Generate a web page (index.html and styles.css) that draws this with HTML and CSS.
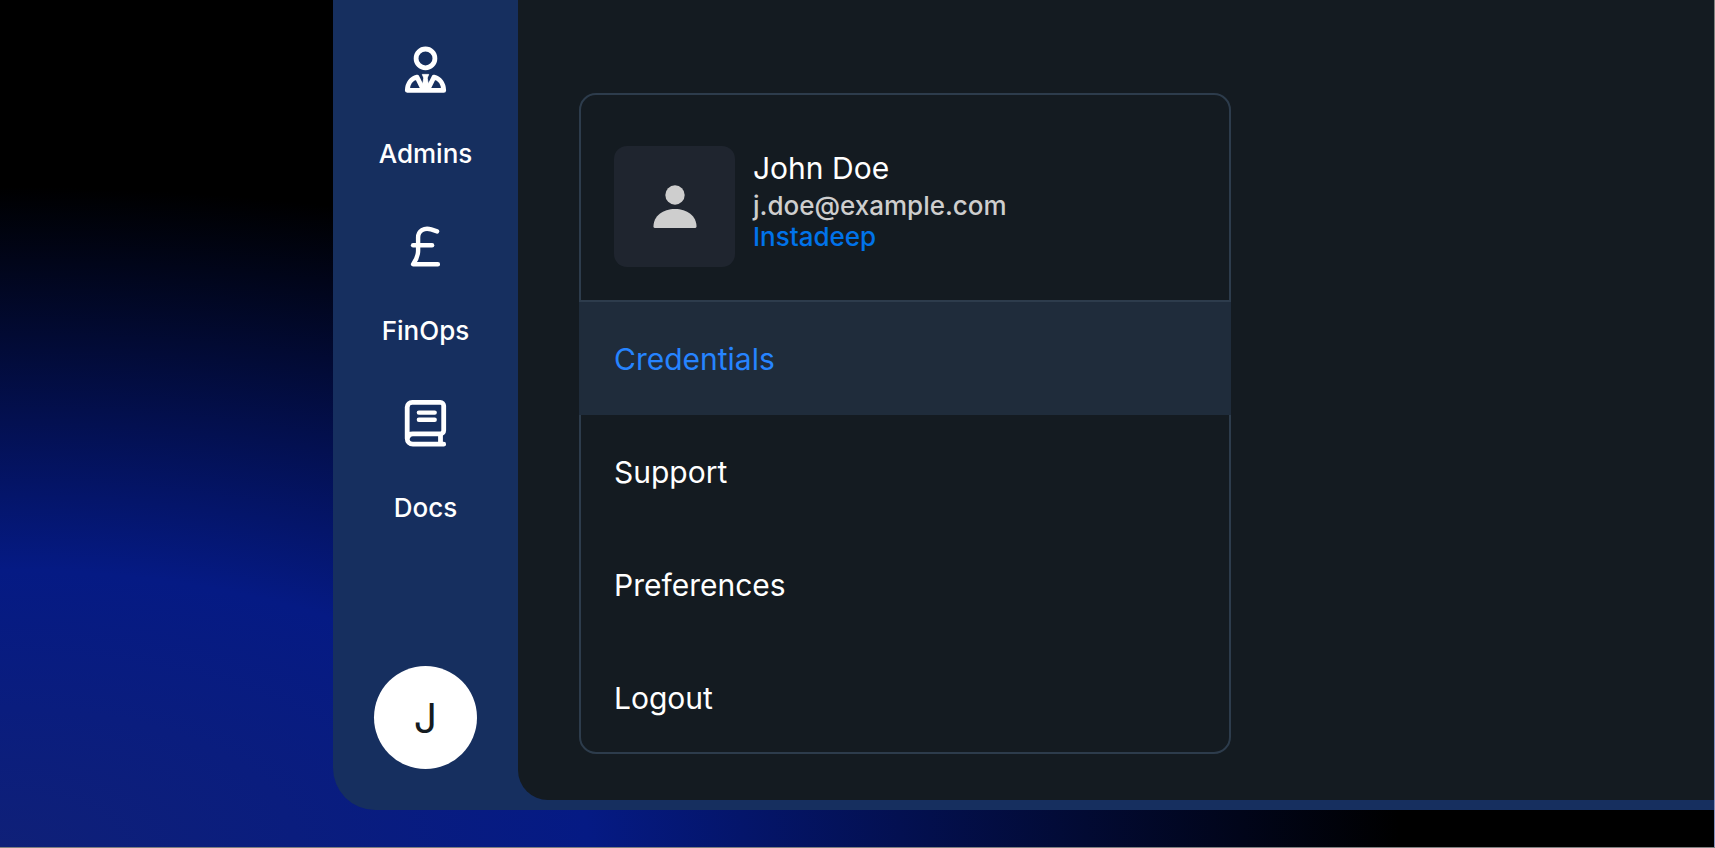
FILE: index.html
```html
<!DOCTYPE html>
<html lang="en">
<head>
    <meta charset="UTF-8">
    <meta name="viewport" content="width=device-width, initial-scale=1.0">
    <title>Account menu</title>
    <link rel="stylesheet" href="styles.css">
</head>
<body>
    <div class="stage">
        <div class="shell">
            <!-- Sidebar -->
            <aside class="sidebar">
                <nav class="nav">
                    <a class="nav-item" href="#admins">
                        <svg class="nav-icon" viewBox="0.5 0 48 48" aria-hidden="true">
                            <circle cx="24" cy="12.4" r="9.4" fill="none" stroke="currentColor" stroke-width="4.8"/>
                            <path d="M15.6 31.2C9.8 32.4 6 37.6 5.8 44.4H42.2C42 37.6 38.2 32.4 32.4 31.2L26.6 43H21.4Z" fill="none" stroke="currentColor" stroke-width="4.8" stroke-linejoin="round"/>
                            <path d="M20.8 28.4H27.2L25.7 32L27.4 41L24 45L20.6 41L22.3 32Z" fill="currentColor" stroke="currentColor" stroke-width="0.8" stroke-linejoin="round"/>
                        </svg>
                        <span>Admins</span>
                    </a>
                    <a class="nav-item" href="#finops">
                        <svg class="nav-icon" viewBox="0.5 0 48 48" fill="none" stroke="currentColor" stroke-width="4.4" stroke-linecap="round" stroke-linejoin="round" aria-hidden="true">
                            <path d="M35.6 8.4L29.6 6.4C22.6 4.2 16.6 8 16.6 14.6V28C16.6 33 14.8 36.6 11.6 41.2H36.4"/>
                            <path d="M11.6 22.2H30.6"/>
                        </svg>
                        <span>FinOps</span>
                    </a>
                    <a class="nav-item" href="#docs">
                        <svg class="nav-icon" viewBox="0.5 0 48 48" fill="none" stroke="currentColor" stroke-width="4.8" stroke-linecap="round" stroke-linejoin="round" aria-hidden="true">
                            <path d="M42.2 44.2H11.4A5.7 5.7 0 0 1 5.7 38.5V7.2A5 5 0 0 1 10.7 2.4H38.8A3.4 3.4 0 0 1 42.2 5.8V30.4A3.4 3.4 0 0 1 38.8 33.8H11.4A5.2 5.2 0 0 0 6.2 37.8"/>
                            <path d="M39 34.5V43.5"/>
                            <path d="M17.4 12.6H33.2M17.4 19.8H33.2" stroke-width="4.4"/>
                        </svg>
                        <span>Docs</span>
                    </a>
                </nav>
                <button class="user-button" type="button" aria-label="Account">J</button>
            </aside>

            <!-- Content -->
            <main class="content">
                <section class="card">
                    <header class="profile">
                        <div class="profile-picture">
                            <svg class="profile-icon" viewBox="0 0 44 44" fill="currentColor" aria-hidden="true">
                                <circle cx="22" cy="10" r="9.7"/>
                                <path d="M22 24C34 24 43.5 31 43.5 41.4Q43.5 43 41.9 43H2.1Q0.5 43 0.5 41.4C0.5 31 10 24 22 24Z"/>
                            </svg>
                        </div>
                        <div class="profile-text">
                            <div class="profile-name">John Doe</div>
                            <div class="profile-email">j.doe@example.com</div>
                            <a class="profile-company" href="#company">Instadeep</a>
                        </div>
                    </header>
                    <nav class="menu">
                        <a class="menu-item active" href="#credentials">Credentials</a>
                        <a class="menu-item" href="#support">Support</a>
                        <a class="menu-item" href="#preferences">Preferences</a>
                        <a class="menu-item" href="#logout">Logout</a>
                    </nav>
                </section>
            </main>
        </div>
    </div>
</body>
</html>
```
FILE: styles.css
```css
* {
    box-sizing: border-box;
}

body {
    margin: 0;
    background-color: #000;
    color: #fff;
    font-family: Inter, "Liberation Sans", sans-serif;
}

a {
    color: inherit;
    text-decoration: none;
}

/* Page background */
.stage {
    display: flex;
    min-height: 100vh;
    padding: 0 0 37px 333px;
    border: solid rgba(255, 255, 255, 0.5);
    border-width: 0 1px 1px 0;
    background: #000 radial-gradient(1400px 660px at 0 100%, #0f2078 0%, #051a84 42%, #000 100%);
}

.shell {
    display: flex;
    flex: 1;
    background-color: #162f5f;
    border-bottom-left-radius: 42px;
}

/* Sidebar */
.sidebar {
    display: flex;
    flex-direction: column;
    justify-content: space-between;
    align-items: center;
    width: 185px;
    padding: 46px 0 41px;
}

.nav {
    display: flex;
    flex-direction: column;
    gap: 53px;
}

.nav-item {
    display: flex;
    flex-direction: column;
    align-items: center;
    gap: 44px;
    font-size: 26px;
    font-weight: 500;
    line-height: 32px;
}

.nav-icon {
    width: 48px;
    height: 48px;
}

.user-button {
    width: 103px;
    height: 103px;
    padding: 0;
    border: none;
    border-radius: 50%;
    background-color: #fff;
    color: #141b21;
    font-family: inherit;
    font-size: 41px;
    cursor: pointer;
}

/* Content */
.content {
    flex: 1;
    margin-bottom: 10px;
    padding: 93px 61px 46px;
    background-color: #141b21;
    border-bottom-left-radius: 30px;
}

.card {
    max-width: 652px;
    border: 2px solid #2d3c4c;
    border-radius: 17px;
}

.profile {
    display: flex;
    gap: 18px;
    padding: 51px 33px 33px;
    border-bottom: 2px solid #2d3c4c;
}

.profile-picture {
    display: flex;
    justify-content: center;
    align-items: center;
    width: 121px;
    height: 121px;
    border-radius: 13px;
    background-color: #1f252f;
    color: #cecece;
}

.profile-icon {
    width: 44px;
    height: 44px;
}

.profile-text {
    font-size: 26px;
    font-weight: 500;
    line-height: 31px;
}

.profile-name {
    font-size: 30px;
    font-weight: 400;
    line-height: 44px;
}

.profile-email {
    color: #cecece;
}

.profile-company {
    color: #0073ea;
}

/* Menu rows run over the card border */
.menu {
    margin: 0 -2px -2px;
}

.menu-item {
    display: block;
    padding: 38px 35px 36px;
    font-size: 30px;
    line-height: 39px;
}

.menu-item.active {
    background-color: #1f2c3b;
    color: #2684ff;
}
```
